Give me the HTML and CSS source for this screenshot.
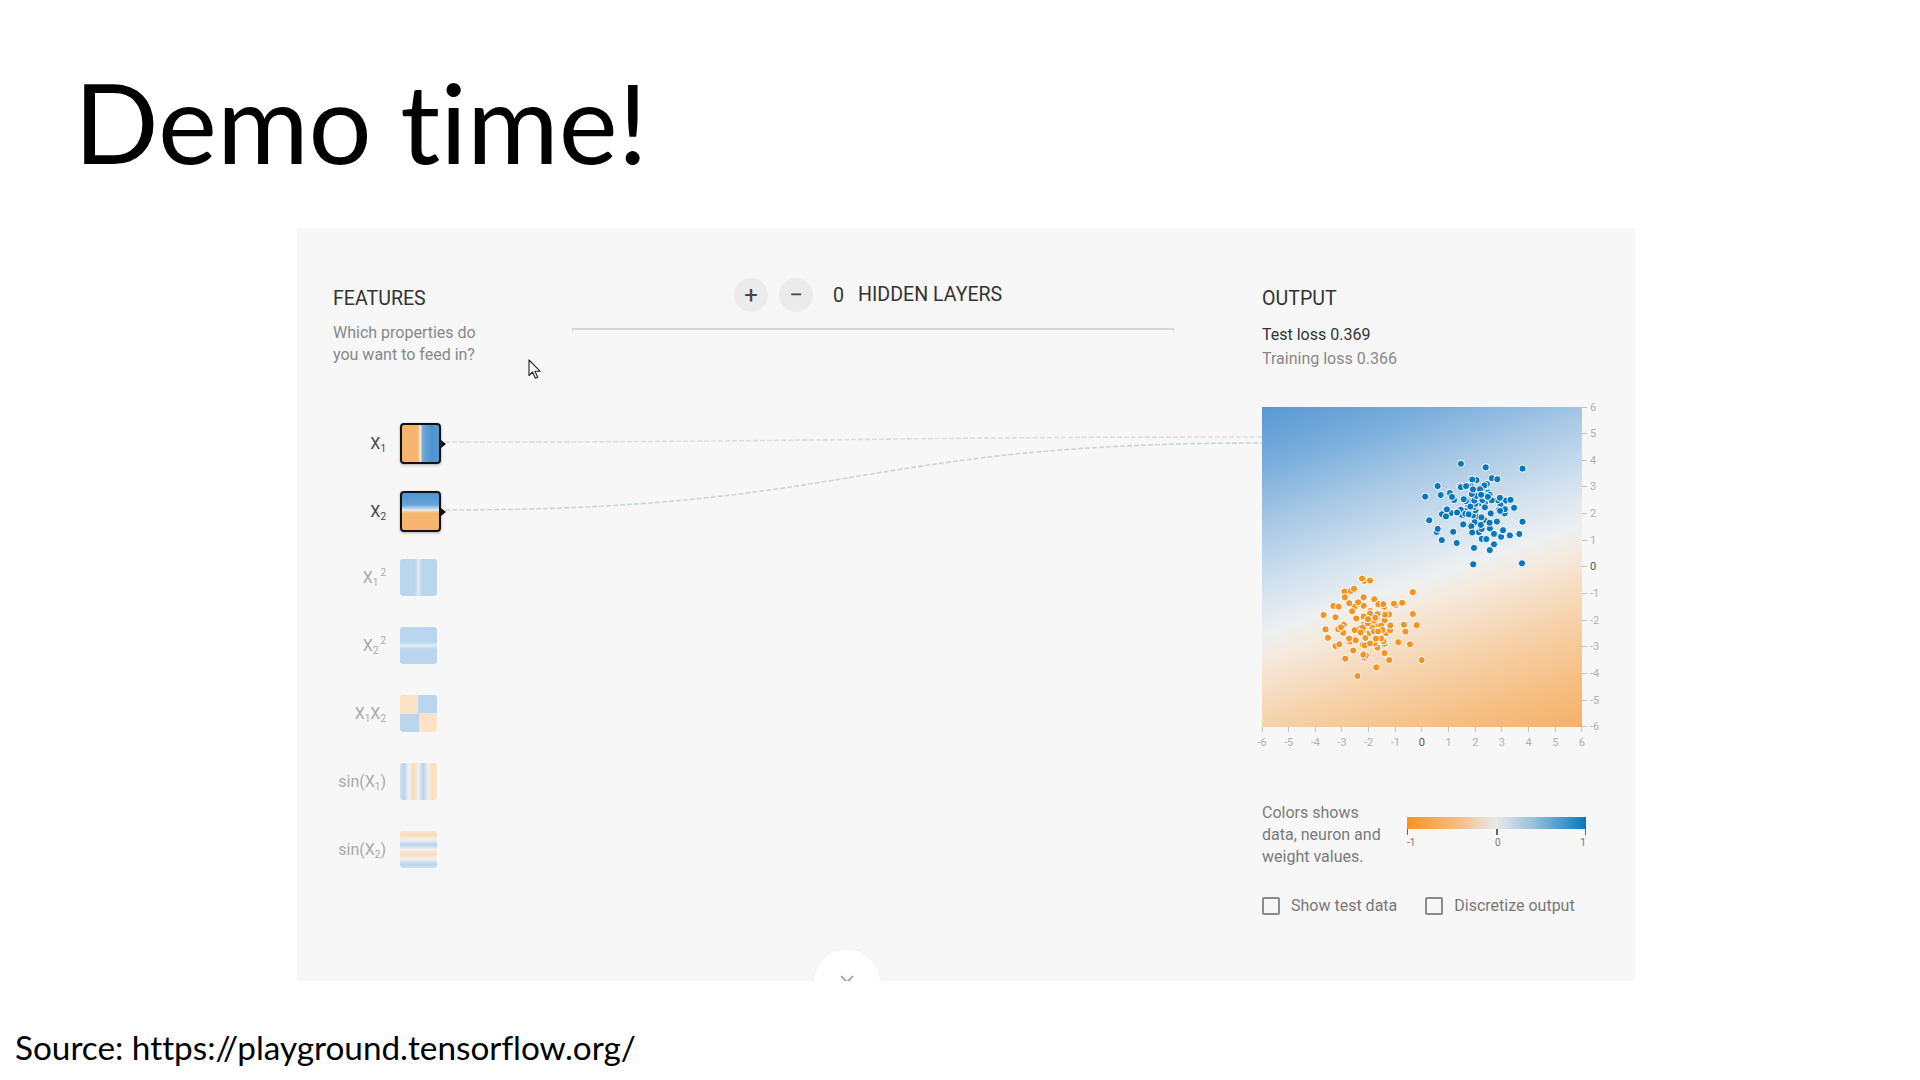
FILE: index.html
```html
<!DOCTYPE html>
<html lang="en">
<head>
<meta charset="utf-8">
<title>Demo time!</title>
<link rel="stylesheet" href="styles.css">
</head>
<body>
<div class="slide">
  <h1 class="title">Demo time!</h1>

  <div class="panel">
    <svg class="links" width="1338" height="753" viewBox="0 0 1338 753">
      <path class="link link-1" d="M148,214 C560,214 560,209 965,209"/>
      <path class="link link-2" d="M148,282 C560,282 560,215 965,215"/>
    </svg>
    <svg class="cursor" width="14" height="21" viewBox="0 0 14 21">
      <path d="M1,1 L1,16.5 L4.6,13 L7.4,19.3 L9.7,18.3 L7,12.2 L12,12.2 Z" fill="#fff" stroke="#222" stroke-width="1.1" stroke-linejoin="round"/>
    </svg>
    <div class="fold"><svg class="chev" width="14" height="8" viewBox="0 0 14 8"><path d="M1,1 L7,7 L13,1" fill="none" stroke="#999" stroke-width="1.6"/></svg></div>

    <div class="col features">
      <div class="head">FEATURES</div>
      <p class="sub">Which properties do<br>you want to feed in?</p>
      <div class="nodes">
        <div class="row active"><span class="lbl">X<sub>1</sub></span><div class="node n-x1"></div></div>
        <div class="row active"><span class="lbl">X<sub>2</sub></span><div class="node n-x2"></div></div>
        <div class="row"><span class="lbl">X<sub>1</sub><sup>2</sup></span><div class="node n-x1sq"></div></div>
        <div class="row"><span class="lbl">X<sub>2</sub><sup>2</sup></span><div class="node n-x2sq"></div></div>
        <div class="row"><span class="lbl">X<sub>1</sub>X<sub>2</sub></span><div class="node n-x1x2"></div></div>
        <div class="row"><span class="lbl">sin(X<sub>1</sub>)</span><div class="node n-sin1"></div></div>
        <div class="row"><span class="lbl">sin(X<sub>2</sub>)</span><div class="node n-sin2"></div></div>
      </div>
    </div>

    <div class="col network">
      <div class="layers-ctl">
        <button class="circ" type="button">+</button>
        <button class="circ minus" type="button">&minus;</button>
        <span class="count">0</span>
        <span class="head">HIDDEN LAYERS</span>
      </div>
      <div class="rule"></div>
    </div>

    <div class="col output">
      <div class="head">OUTPUT</div>
      <div class="loss">
        <div class="test">Test loss 0.369</div>
        <div class="train">Training loss 0.366</div>
      </div>
      <div class="plotwrap">
        <div class="plot"><svg id="pts" width="320" height="320" viewBox="0 0 320 320"></svg></div>
        <div class="yaxis">
          <span class="yt">6</span><span class="yt">5</span><span class="yt">4</span><span class="yt">3</span><span class="yt">2</span><span class="yt">1</span><span class="yt zero">0</span><span class="yt">-1</span><span class="yt">-2</span><span class="yt">-3</span><span class="yt">-4</span><span class="yt">-5</span><span class="yt">-6</span>
        </div>
      </div>
      <div class="xaxis">
        <span class="xt">-6</span><span class="xt">-5</span><span class="xt">-4</span><span class="xt">-3</span><span class="xt">-2</span><span class="xt">-1</span><span class="xt zero">0</span><span class="xt">1</span><span class="xt">2</span><span class="xt">3</span><span class="xt">4</span><span class="xt">5</span><span class="xt">6</span>
      </div>
      <div class="legend">
        <div class="legtext">Colors shows<br>data, neuron and<br>weight values.</div>
        <div class="cbar">
          <div class="bar"></div>
          <div class="cticks"><span></span><span></span><span></span></div>
          <div class="clabels"><span>-1</span><span>0</span><span>1</span></div>
        </div>
      </div>
      <div class="checks">
        <label class="chk"><span class="box"></span>Show test data</label>
        <label class="chk"><span class="box"></span>Discretize output</label>
      </div>
    </div>
  </div>

  <div class="source">Source: https://playground.tensorflow.org/</div>
</div>
<script src="script.js"></script>
</body>
</html>
```

FILE: styles.css
```css
html, body {
  margin: 0;
  padding: 0;
  background: #fff;
}

.slide {
  width: 1920px;
  height: 1080px;
  overflow: hidden;
  display: flex;
  flex-direction: column;
  background: #fff;
}

.title {
  margin: 55px 0 0 74px;
  font-family: Lato, "Open Sans", sans-serif;
  font-weight: 400;
  font-size: 111.5px;
  line-height: 1.2;
  height: 129px;
  color: #000;
  font-variant-ligatures: none;
  font-feature-settings: "liga" 0, "clig" 0;
}

.source {
  margin: 46px 0 0 15px;
  font-family: Lato, "Open Sans", sans-serif;
  font-size: 33.3px;
  line-height: 40px;
  color: #000;
  font-variant-ligatures: none;
}

/* ---------- panel ---------- */
.panel {
  position: relative;
  margin: 44px 0 0 297px;
  width: 1338px;
  height: 753px;
  flex: none;
  box-sizing: border-box;
  padding: 60px 0 0 36px;
  background: #f7f7f7;
  overflow: hidden;
  display: flex;
  font-family: Roboto, "Liberation Sans", Arial, sans-serif;
  color: #333;
}

.links {
  position: absolute;
  left: 0;
  top: 0;
  pointer-events: none;
}
.link {
  fill: none;
  stroke-width: 1.6;
  stroke-dasharray: 5 2;
}
.link-1 { stroke: #e4dcd9; }
.link-2 { stroke: #c8d5e1; }

.cursor {
  position: absolute;
  left: 231px;
  top: 131px;
}

.fold {
  position: absolute;
  left: 517px;
  top: 721px;
  width: 66px;
  height: 66px;
  border-radius: 50%;
  background: #fff;
  box-shadow: 0 0 3px rgba(0,0,0,0.06);
  display: flex;
  justify-content: center;
  padding-top: 26px;
  box-sizing: border-box;
}
.chev { display: block; }

.head {
  font-size: 19.6px;
  line-height: 22px;
  color: #333;
}

/* ---------- features ---------- */
.features { width: 239px; flex: none; }

.sub {
  margin: 12px 0 0;
  font-size: 16px;
  line-height: 22px;
  color: #888;
}

.nodes { margin-top: 57px; }

.row {
  display: flex;
  align-items: flex-start;
  height: 68px;
}

.lbl {
  width: 53px;
  margin-right: 14px;
  text-align: right;
  font-size: 16px;
  line-height: 37px;
  color: #aaa;
  white-space: nowrap;
}
.row.active .lbl {
  line-height: 41px;
  color: #444;
}
.lbl sub, .lbl sup {
  font-size: 10px;
  line-height: 0;
}
.lbl sup { vertical-align: 7px; margin-left: 2px; }
.lbl sub { vertical-align: -3px; }

.node {
  width: 37px;
  height: 37px;
  border-radius: 3px;
  position: relative;
}
.row.active .node {
  width: 41px;
  height: 41px;
  box-sizing: border-box;
  border: 2px solid #111;
  border-radius: 4px;
  box-shadow: 0 1px 3px rgba(0,0,0,0.3);
}
.row.active .node::after {
  content: "";
  position: absolute;
  right: -7px;
  top: 50%;
  margin-top: -4px;
  border-left: 5px solid #111;
  border-top: 4px solid transparent;
  border-bottom: 4px solid transparent;
}

.n-x1 {
  background: linear-gradient(90deg, #f6b36d 0%, #f6b56f 42%, #f2e6da 50%, #6ea8da 56%, #4f93d1 80%, #5797d3 100%);
}
.n-x2 {
  background: linear-gradient(180deg, #4f93d1 0%, #67a4da 32%, #e3e9ee 46%, #f6b86f 54%, #f6b36d 100%);
}
.n-x1sq {
  background: linear-gradient(90deg, #bad6ee 0%, #bad6ee 40%, #e0ebf4 50%, #bad6ee 60%, #bad6ee 100%);
}
.n-x2sq {
  background: linear-gradient(180deg, #bad6ee 0%, #bad6ee 40%, #e0ebf4 50%, #bad6ee 60%, #bad6ee 100%);
}
.n-x1x2 {
  background: conic-gradient(#bad6ee 0deg 90deg, #fde3c6 90deg 180deg, #bad6ee 180deg 270deg, #fde3c6 270deg 360deg);
}
.n-sin1 {
  background: linear-gradient(90deg, #cfe1f1 0%, #b7d4ee 11%, #f1f1ef 24%, #fcdcb8 37%, #f1f1ef 50%, #b7d4ee 63%, #f1f1ef 76%, #fcdcb8 89%, #f8e6d3 100%);
}
.n-sin2 {
  background: linear-gradient(180deg, #f8e6d3 0%, #fcdcb8 11%, #f1f1ef 24%, #b7d4ee 37%, #f1f1ef 50%, #fcdcb8 63%, #f1f1ef 76%, #b7d4ee 89%, #cfe1f1 100%);
}

/* ---------- network ---------- */
.network { width: 602px; flex: none; }

.layers-ctl {
  display: flex;
  align-items: center;
  height: 34px;
  margin: -10px 0 0 162px;
}
.circ {
  width: 34px;
  height: 34px;
  border: 0;
  padding: 0;
  border-radius: 50%;
  background: #ebebeb;
  color: #444;
  font-family: Roboto, "Liberation Sans", Arial, sans-serif;
  font-size: 24px;
  line-height: 34px;
  text-align: center;
}
.circ.minus { margin-left: 11px; }
.count {
  margin: 0 14px 0 20px;
  font-size: 19.6px;
  color: #333;
}

.rule {
  margin-top: 16px;
  height: 4px;
  box-sizing: border-box;
  border-top: 2px solid #d6d6d6;
  border-left: 1px solid #d6d6d6;
  border-right: 1px solid #d6d6d6;
}

/* ---------- output ---------- */
.output {
  margin-left: 88px;
  width: 373px;
  flex: none;
}

.loss {
  margin-top: 13px;
  font-size: 16px;
  line-height: 24px;
}
.test { color: #333; }
.train { color: #888; }

.plotwrap {
  margin-top: 36px;
  display: flex;
}
.plot {
  width: 320px;
  height: 320px;
  flex: none;
  background: linear-gradient(161deg, #5898d3 0%, #7aaedc 14%, #a6c7e5 27%, #d1e1ef 42%, #eef0f1 53%, #f6e8d9 60%, #f6d5b0 72%, #f6c289 86%, #f5b168 100%);
}
.plot svg { display: block; }
.pt-b { fill: #0877bd; }
.pt-o { fill: #f59322; }
.pt { stroke: #fff; stroke-width: 1; }

.yaxis {
  display: flex;
  flex-direction: column;
  justify-content: space-between;
  height: 333px;
  margin: -6.5px 0 -6.5px;
}
.yt {
  height: 13px;
  display: flex;
  align-items: center;
  font-size: 11px;
  color: #b0b0b0;
}
.yt::before {
  content: "";
  width: 5px;
  height: 1px;
  background: #c4c4c4;
  margin-right: 3px;
}

.xaxis {
  display: flex;
  justify-content: space-between;
  width: 333px;
  margin-left: -6.5px;
}
.xt {
  width: 13px;
  display: flex;
  flex-direction: column;
  align-items: center;
  font-size: 11px;
  line-height: 13px;
  color: #b0b0b0;
  white-space: nowrap;
}
.xt::before {
  content: "";
  width: 1px;
  height: 5px;
  background: #c4c4c4;
  margin-bottom: 4px;
}
.zero { color: #555; }

.legend {
  margin-top: 53px;
  display: flex;
}
.legtext {
  width: 145px;
  flex: none;
  font-size: 16px;
  line-height: 22px;
  color: #7a7a7a;
}
.cbar {
  width: 179px;
  margin-top: 15px;
}
.bar {
  height: 12px;
  background: linear-gradient(90deg, #f59322 0%, #f4c08a 30%, #e8e9ea 50%, #9cc0dc 70%, #0877bd 100%);
}
.cticks {
  display: flex;
  justify-content: space-between;
  height: 6px;
}
.cticks span {
  width: 1px;
  background: #666;
}
.cticks span:nth-child(2) { width: 2px; }
.clabels {
  display: flex;
  justify-content: space-between;
  margin-top: 2px;
  font-size: 10px;
  line-height: 12px;
  color: #777;
}

.checks {
  margin-top: 29px;
  display: flex;
  gap: 28px;
}
.chk {
  display: flex;
  align-items: center;
  gap: 11px;
  font-size: 16px;
  line-height: 18px;
  color: #777;
}
.box {
  width: 18px;
  height: 18px;
  box-sizing: border-box;
  border: 2px solid #8a8a8a;
  border-radius: 2px;
}
```

FILE: script.js
```js
(function () {
  var svg = document.getElementById('pts');
  var NS = 'http://www.w3.org/2000/svg';
  var s = 320 / 12;
  var seed = 12345;
  function rnd() {
    seed = (seed * 16807) % 2147483647;
    return (seed - 1) / 2147483646;
  }
  function gauss() {
    var u = rnd() || 1e-9, v = rnd();
    return Math.sqrt(-2 * Math.log(u)) * Math.cos(2 * Math.PI * v);
  }
  function add(x, y, cls) {
    var c = document.createElementNS(NS, 'circle');
    c.setAttribute('cx', ((x + 6) * s).toFixed(1));
    c.setAttribute('cy', ((6 - y) * s).toFixed(1));
    c.setAttribute('r', '3.6');
    c.setAttribute('class', 'pt ' + cls);
    svg.appendChild(c);
  }
  function cluster(cx, cy, n, cls) {
    for (var i = 0; i < n; i++) {
      var dx, dy;
      do {
        dx = gauss() * 0.7;
        dy = gauss() * 0.7;
      } while (dx * dx + dy * dy > 3.2);
      add(cx + dx, cy + dy, cls);
    }
  }
  cluster(-2.0, -2.0, 100, 'pt-o');
  cluster(2.1, 2.1, 100, 'pt-b');
  var ob = [[-1.95,-0.51],[-3.69,-1.8],[-3.62,-2.34],[-2.88,-3.44],[-2.42,-4.09],[-1.23,-3.49],[-0.01,-3.49],[-0.35,-0.94],[-0.2,-2.18],[-0.45,-2.9],[-3.1,-2.9]];
  var bb = [[1.46,3.87],[2.39,3.74],[3.77,3.69],[0.12,2.64],[0.27,1.75],[0.59,1.43],[1.92,0.1],[3.75,0.14],[3.77,1.7],[3.32,2.52],[0.7,2.7],[2.7,0.85],[1.3,0.9]];
  ob.forEach(function (p) { add(p[0], p[1], 'pt-o'); });
  bb.forEach(function (p) { add(p[0], p[1], 'pt-b'); });
})();
```
